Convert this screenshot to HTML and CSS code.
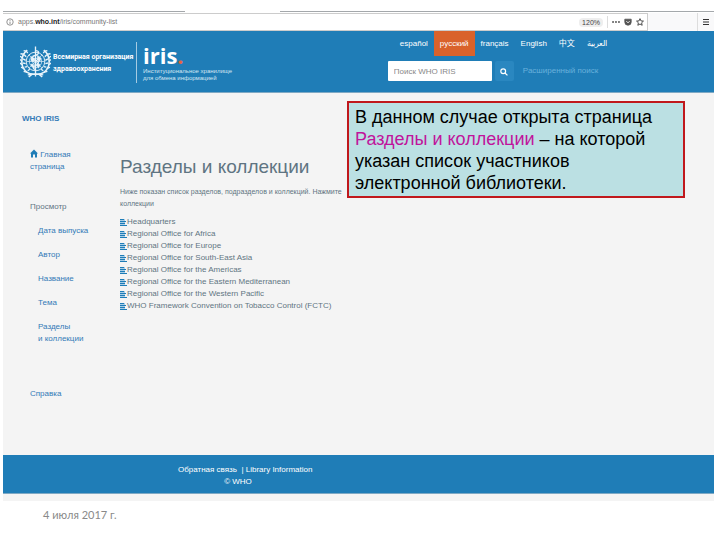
FILE: index.html
```html
<!DOCTYPE html>
<html lang="ru">

<head>
    <meta charset="UTF-8">
    <meta name="viewport" content="width=device-width, initial-scale=1.0">
    <title>WHO IRIS</title>
    <link rel="stylesheet" href="styles.css">
</head>

<body>
    <div class="window">
        <div class="tabs">
            <span class="tab-line tab-line-left"></span>
            <span class="tab-line tab-line-right"></span>
        </div>
        <div class="toolbar">
            <div class="address">
                <svg class="info" viewBox="0 0 10 10">
                    <circle cx="5" cy="5" r="4" fill="none" stroke="#777" />
                    <path d="M5 4.5V7.5M5 2.5V3.5" stroke="#777" />
                </svg>
                <span class="url">apps.<b>who.int</b>/iris/community-list</span>
                <span class="zoom">120%</span>
                <span class="divider"></span>
                <svg class="dots" viewBox="0 0 10 10" fill="#555">
                    <circle cx="1.3" cy="5" r="1.2" />
                    <circle cx="5" cy="5" r="1.2" />
                    <circle cx="8.7" cy="5" r="1.2" />
                </svg>
                <svg class="pocket" viewBox="0 0 10 10">
                    <path d="M1 1.5h8v3.5a4 4 0 0 1-8 0z" fill="#555" stroke="#555" stroke-linejoin="round" />
                    <path d="M3 4l2 2 2-2" fill="none" stroke="#fff" stroke-width="1.2" />
                </svg>
                <svg class="star" viewBox="0 0 10 10">
                    <path d="M5 .8l1.2 2.8 3.1.3-2.3 2.1.7 3.1L5 7.5 2.3 9.1l.7-3.1L.7 3.9l3.1-.3z" fill="none" stroke="#444" stroke-width="1.2" stroke-linejoin="round" />
                </svg>
            </div>
            <button class="menu" aria-label="Меню">
                <svg viewBox="0 0 8 8">
                    <path d="M1 1.5h6M1 4h6M1 6.5h6" stroke="#333" stroke-width="1.2" />
                </svg>
            </button>
        </div>

        <header class="header">
            <svg class="emblem" viewBox="0 0 60 64" fill="none" stroke="#e8f3fa">
                <circle cx="30" cy="31" r="18" stroke-width="1.8" />
                <circle cx="30" cy="31" r="12" stroke-width="1.3" />
                <circle cx="30" cy="31" r="6" stroke-width="1.3" />
                <path d="M12 31h36M17 18l26 26M43 18L17 44" stroke-width="1.3" />
                <path d="M22 22l6 3-2 7-5-3zM34 20l7 5-3 6-5-4zM33 35l6 2-3 7-3-4zM21 36l5 1 1 6-5-3z" fill="#e8f3fa" />
                <path d="M30 2v58" stroke-width="2.6" />
                <path d="M30 10c8 0 8 7 0 9s-8 8 0 10 7 8 0 10-5 6 0 8" stroke-width="2.4" />
                <path d="M14 9C0 20 0 42 14 52c6 4 11 4 16 3M46 9c14 11 14 33 0 43-6 4-11 4-16 3M24 55l-7 6M36 55l7 6" stroke-width="3" />
                <path d="M12 11l-5-1M8 17l-7-1M5 24l-5-3M4 31l-4-4M5 38l-5-4M8 45l-6-3M14 52l-7-2M22 56l-7 1M12 11l3 4M8 18l4 4M6 26l5 3M6 34l5 1M9 42l5-1M15 49l4-3M48 11l5-1M52 17l7-1M55 24l5-3M56 31l4-4M55 38l5-4M52 45l6-3M46 52l7-2M38 56l7 1M48 11l-3 4M52 18l-4 4M54 26l-5 3M54 34l-5 1M51 42l-5-1M45 49l-4-3" stroke-width="2.6" />
            </svg>
            <a class="who" href="#">Всемирная организация<br>здравоохранения</a>
            <a class="iris" href="#">
                <strong>iris<span class="orange">.</span></strong>
                <span class="iris-text">Институциональное хранилище<br>для обмена информацией</span>
            </a>
            <div class="tools">
                <nav class="langs">
                    <a href="#">español</a>
                    <a class="active" href="#">русский</a>
                    <a href="#">français</a>
                    <a href="#">English</a>
                    <a href="#">中文</a>
                    <a href="#" lang="ar">العربية</a>
                </nav>
                <form class="search">
                    <input type="text" placeholder="Поиск WHO IRIS" aria-label="Поиск WHO IRIS">
                    <button type="button" aria-label="Поиск">
                        <svg viewBox="0 0 10 10" fill="none" stroke="#fff" stroke-width="1.5">
                            <circle cx="4" cy="4" r="3" />
                            <path d="M6.2 6.2L9.3 9.3" />
                        </svg>
                    </button>
                    <a href="#">Расширенный поиск</a>
                </form>
            </div>
        </header>

        <div class="content">
            <aside class="sidebar">
                <a class="brand" href="#">WHO IRIS</a>
                <a class="home" href="#"><svg viewBox="0 0 8 8" fill="#1f7db7">
                        <path d="M4 0l4 4H7v4H5V5H3v3H1V4H0z" />
                    </svg> Главная<br>страница</a>
                <h2>Просмотр</h2>
                <nav class="browse">
                    <a href="#">Дата выпуска</a>
                    <a href="#">Автор</a>
                    <a href="#">Название</a>
                    <a href="#">Тема</a>
                    <a href="#">Разделы<br>и коллекции</a>
                </nav>
                <a class="help" href="#">Справка</a>
            </aside>
            <main class="main">
                <h1>Разделы и коллекции</h1>
                <p>Ниже показан список разделов, подразделов и коллекций. Нажмите<br>коллекции</p>
                <ul class="list">
                    <li><a href="#">Headquarters</a></li>
                    <li><a href="#">Regional Office for Africa</a></li>
                    <li><a href="#">Regional Office for Europe</a></li>
                    <li><a href="#">Regional Office for South-East Asia</a></li>
                    <li><a href="#">Regional Office for the Americas</a></li>
                    <li><a href="#">Regional Office for the Eastern Mediterranean</a></li>
                    <li><a href="#">Regional Office for the Western Pacific</a></li>
                    <li><a href="#">WHO Framework Convention on Tobacco Control (FCTC)</a></li>
                </ul>
            </main>
        </div>

        <footer class="footer">
            <div class="footer-text">
                <a href="#">Обратная связь</a> &nbsp;| <a href="#">Library Information</a><br>
                © WHO
            </div>
        </footer>

        <div class="callout">В данном случае открыта страница <span>Разделы и коллекции</span> – на которой указан список участников электронной библиотеки.</div>
    </div>
    <div class="date">4 июля 2017 г.</div>
</body>

</html>
```

FILE: styles.css
```css
* {
    padding: 0;
    margin: 0;
    box-sizing: border-box;
}

body {
    background: #fff;
    font-family: 'Liberation Sans', 'Noto Sans CJK SC', sans-serif;
    font-size: 8px;
    line-height: 12px;
    color: #5f7482;
}

a {
    color: inherit;
    text-decoration: none;
}

button {
    border: none;
}

.window {
    position: relative;
    margin: 11px 6px 0 3px;
    padding-bottom: 7px;
    background: #f4f4f4;
}

/* browser */
.tabs {
    display: flex;
    justify-content: space-between;
    background: #fff;
    height: 2px;
}

.tab-line {
    height: 1px;
    background: #a4a8ab;
}

.tab-line-left {
    width: 182px;
}

.tab-line-right {
    width: 61%;
}

.toolbar {
    display: flex;
    height: 18px;
    background: #f9f9fa;
}

.address {
    display: flex;
    align-items: center;
    flex: 1;
    gap: 4px;
    padding: 0 3px;
    background: #fff;
    border: 1px solid #ccc;
    border-left: none;
    color: #777;
    font-size: 7px;
}

.address svg {
    width: 8px;
    height: 8px;
}

.url {
    flex: 1;
}

.url b {
    color: #222;
}

.zoom {
    padding: 0 3px;
    border-radius: 4px;
    background: #eee;
    color: #444;
    line-height: 9px;
}

.divider {
    width: 1px;
    height: 12px;
    background: #ddd;
}

.menu {
    width: 17px;
    margin-left: 49px;
    border-left: 1px solid #ddd;
    background: none;
}

.menu svg {
    display: block;
    width: 8px;
    height: 8px;
    margin: 0 auto;
}

/* header */
.header {
    display: flex;
    height: 62px;
    padding-left: 17px;
    background: #1f7db7;
    border-bottom: 1px solid #7fa9c4;
    color: #fff;
}

.emblem {
    width: 31px;
    height: 34px;
    margin-top: 14px;
}

.who {
    width: 83px;
    margin: 20px 0 0 2px;
    font-family: Roboto, sans-serif;
    font-size: 7px;
    font-weight: bold;
    line-height: 12px;
    white-space: nowrap;
}

.iris {
    display: flex;
    flex-direction: column;
    height: 41px;
    margin-top: 11px;
    padding-left: 6px;
    border-left: 1px solid #a5cbe2;
    white-space: nowrap;
}

.iris strong {
    font-family: 'Open Sans', sans-serif;
    font-size: 22px;
    line-height: 26px;
}

.orange {
    color: #e8623a;
}

.iris-text {
    font-size: 6px;
    line-height: 7px;
    color: #d3e7f3;
}

.tools {
    width: 47%;
    margin-left: auto;
}

.langs {
    display: flex;
    height: 25px;
    padding-left: 6px;
}

.langs a {
    padding: 0 6px;
    line-height: 25px;
}

.langs .active {
    background: #d9622b;
}

.search {
    display: flex;
    align-items: center;
    height: 20px;
    margin-top: 5px;
}

.search input {
    width: 104px;
    height: 20px;
    padding: 0 6px;
    border: none;
    border-radius: 1px;
    font: inherit;
}

.search input::placeholder {
    color: #888;
}

.search button {
    width: 19px;
    height: 20px;
    margin: 0 9px 0 3px;
    border-radius: 2px;
    background: #2a87c0;
}

.search svg {
    width: 8px;
    height: 8px;
}

.search a {
    color: #69b1dc;
}

/* content */
.content {
    display: flex;
    padding-bottom: 55px;
}

.sidebar {
    display: flex;
    flex-direction: column;
    width: 117px;
    padding: 20px 0 0 27px;
    color: #337ab7;
}

.brand {
    margin-left: -8px;
    font-weight: bold;
}

.home {
    margin-top: 24px;
}

.home svg {
    width: 8px;
    height: 9px;
    vertical-align: -1px;
}

.sidebar h2 {
    margin-top: 28px;
    color: #5f7482;
    font-size: 8px;
    font-weight: normal;
}

.browse {
    display: flex;
    flex-direction: column;
    gap: 12px;
    padding: 12px 0 0 8px;
}

.help {
    margin-top: 43px;
}

.main {
    padding-top: 59px;
    white-space: nowrap;
}

.main h1 {
    font-size: 19px;
    font-weight: normal;
    line-height: 30px;
}

.main p {
    margin-top: 4px;
    font-size: 7px;
}

.list {
    margin-top: 6px;
    list-style: none;
}

.list li {
    display: flex;
    align-items: center;
}

/* small stack of lines before each item */
.list li::before {
    content: "";
    width: 7px;
    height: 7px;
    background:
        linear-gradient(#1f7db7, #1f7db7) 0 0 / 4px 1px no-repeat,
        linear-gradient(#1f7db7, #1f7db7) 0 2px / 6px 1px no-repeat,
        linear-gradient(#1f7db7, #1f7db7) 0 4px / 5px 1px no-repeat,
        linear-gradient(#1f7db7, #1f7db7) 0 6px / 7px 1px no-repeat,
        linear-gradient(#a9cde6, #a9cde6) 0 0 / 5px 7px no-repeat;
}

/* footer */
.footer {
    height: 39px;
    padding: 9px 0 0 175px;
    background: #1f7db7;
    border-bottom: 1px solid #7fa9c4;
    color: #fff;
}

.footer-text {
    width: 120px;
    text-align: center;
    white-space: nowrap;
}

.callout {
    position: absolute;
    top: 90px;
    left: 344px;
    width: 338px;
    padding: 3px 8px 2px 6px;
    background: #bbe0e3;
    border: 2px solid #c0181c;
    color: #000;
    font-size: 18px;
    line-height: 22px;
}

.callout span {
    color: #c0149c;
}

.date {
    padding: 6px 0 0 43px;
    color: #898989;
    font-family: Lato, sans-serif;
    font-size: 11px;
    line-height: 16px;
}
```
